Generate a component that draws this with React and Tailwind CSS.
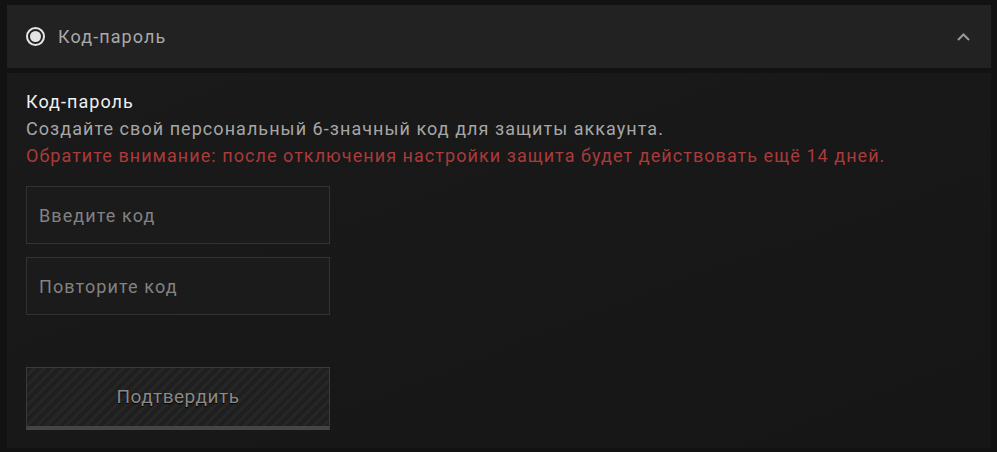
import React from 'react';

const font = { fontFamily: 'Roboto, "Noto Sans", sans-serif' };

function Radio() {
    return (
        <span className="flex h-[19px] w-[19px] items-center justify-center rounded-full border-2 border-[#e6e6e6]">
            <span className="h-[11px] w-[11px] rounded-full bg-[#e4e4e4]" />
        </span>
    );
}

function CodeInput({ placeholder }) {
    return (
        <input
            type="password"
            placeholder={placeholder}
            className="h-[58px] w-[304px] border border-[#323232] bg-[#1b1b1b] px-[12px] text-[18px] tracking-[1.1px] text-[#ccc] outline-none placeholder:text-[#828282]"
        />
    );
}

export default function App() {
    return (
        <div className="h-[452px] w-[997px] bg-[#121212] pl-[7px] pr-[6px] pt-[5px]" style={font}>
            {/* Header */}
            <div className="flex h-[63px] items-center bg-[#222222] pl-[19px] pr-[20px]">
                <Radio />
                <span className="ml-[13px] text-[18px] tracking-[1.1px] text-[#a9a9a9]">Код-пароль</span>
                <svg className="ml-auto h-[10px] w-[15px]" viewBox="0 0 15 10" fill="none">
                    <path d="M2 8 L7.5 2.5 L13 8" stroke="#9a9a9a" strokeWidth="2" />
                </svg>
            </div>

            {/* Body */}
            <div className="mt-[5px] h-[375px] bg-gradient-to-br from-[#1a1a1a] to-[#161616] pl-[19px] pt-[16px] tracking-[1.05px]">
                <h3 className="text-[18px] leading-[26px] text-[#f0f0f0]">Код-пароль</h3>
                <p className="text-[18px] leading-[28px] text-[#a6a6a6]">
                    Создайте свой персональный 6-значный код для защиты аккаунта.
                </p>
                <p className="text-[18px] leading-[26px] text-[#ab3a3a]">
                    Обратите внимание: после отключения настройки защита будет действовать ещё 14 дней.
                </p>

                <div className="mt-[17px] flex flex-col gap-[13px]">
                    <CodeInput placeholder="Введите код" />
                    <CodeInput placeholder="Повторите код" />
                </div>

                <button
                    disabled
                    className="mt-[52px] h-[63px] w-[304px] border border-b-[4px] border-[#3a3a3a] border-b-[#454545] bg-[repeating-linear-gradient(135deg,#1f1f1f_0px,#1f1f1f_4px,#262626_4px,#262626_7px)] text-[19px] tracking-[0.5px] text-[#8a8a8a] [text-shadow:0_1px_1px_#000]"
                >
                    Подтвердить
                </button>
            </div>
        </div>
    );
}
